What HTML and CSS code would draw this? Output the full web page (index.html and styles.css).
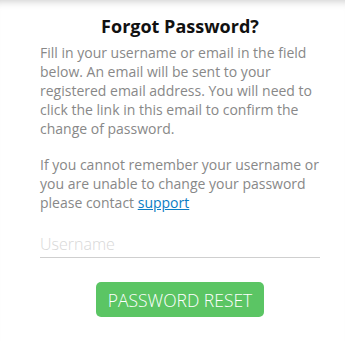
FILE: index.html
```html
<!DOCTYPE html>
<html>
<head>
<meta charset="utf-8">
<link rel="stylesheet" href="styles.css">
</head>
<body>
<div class="page">
  <h1 class="title">Forgot Password?</h1>
  <p class="text">Fill in your username or email in the field below. An email will be sent to your registered email address. You will need to click the link in this email to confirm the change of password.</p>
  <p class="text second">If you cannot remember your username or you are unable to change your password please contact <a href="#" class="link">support</a></p>
  <div class="field">
    <input class="input" type="text" placeholder="Username">
  </div>
  <div class="actions">
    <button class="btn" type="button">PASSWORD RESET</button>
  </div>
</div>
</body>
</html>
```
FILE: styles.css
```css
html, body {
  margin: 0;
  padding: 0;
  background: #fff;
}
body {
  font-family: "Open Sans", "Liberation Sans", sans-serif;
}
.page {
  min-height: 341px;
  box-sizing: border-box;
  padding: 14px 25px 0 40px;
  box-shadow: inset 0 9px 8px -8px rgba(0,0,0,0.22);
}
.title {
  margin: 0 0 5px 0;
  text-align: center;
  font-size: 18px;
  line-height: 24px;
  font-weight: 700;
  color: #111;
}
.text {
  margin: 0;
  font-size: 14px;
  line-height: 19px;
  color: #888;
}
.second {
  margin-top: 17px;
}
.link {
  color: #0b7dc4;
  text-decoration: underline;
}
.field {
  margin-top: 18px;
  width: 280px;
}
.input {
  display: block;
  width: 100%;
  box-sizing: border-box;
  border: none;
  border-bottom: 1px solid #cfcfcf;
  outline: none;
  padding: 0;
  height: 28px;
  font-family: "Open Sans", "Liberation Sans", sans-serif;
  font-weight: 300;
  font-size: 16px;
  color: #555;
  background: transparent;
}
.input::placeholder {
  color: #d8d8d8;
}
.actions {
  width: 280px;
  display: flex;
  justify-content: center;
  margin-top: 24px;
}
.btn {
  background: #5bc564;
  border: none;
  border-radius: 5px;
  color: #fff;
  font-family: "Open Sans", "Liberation Sans", sans-serif;
  font-weight: 300;
  font-size: 17.5px;
  height: 35px;
  padding: 0 12px;
}
```
